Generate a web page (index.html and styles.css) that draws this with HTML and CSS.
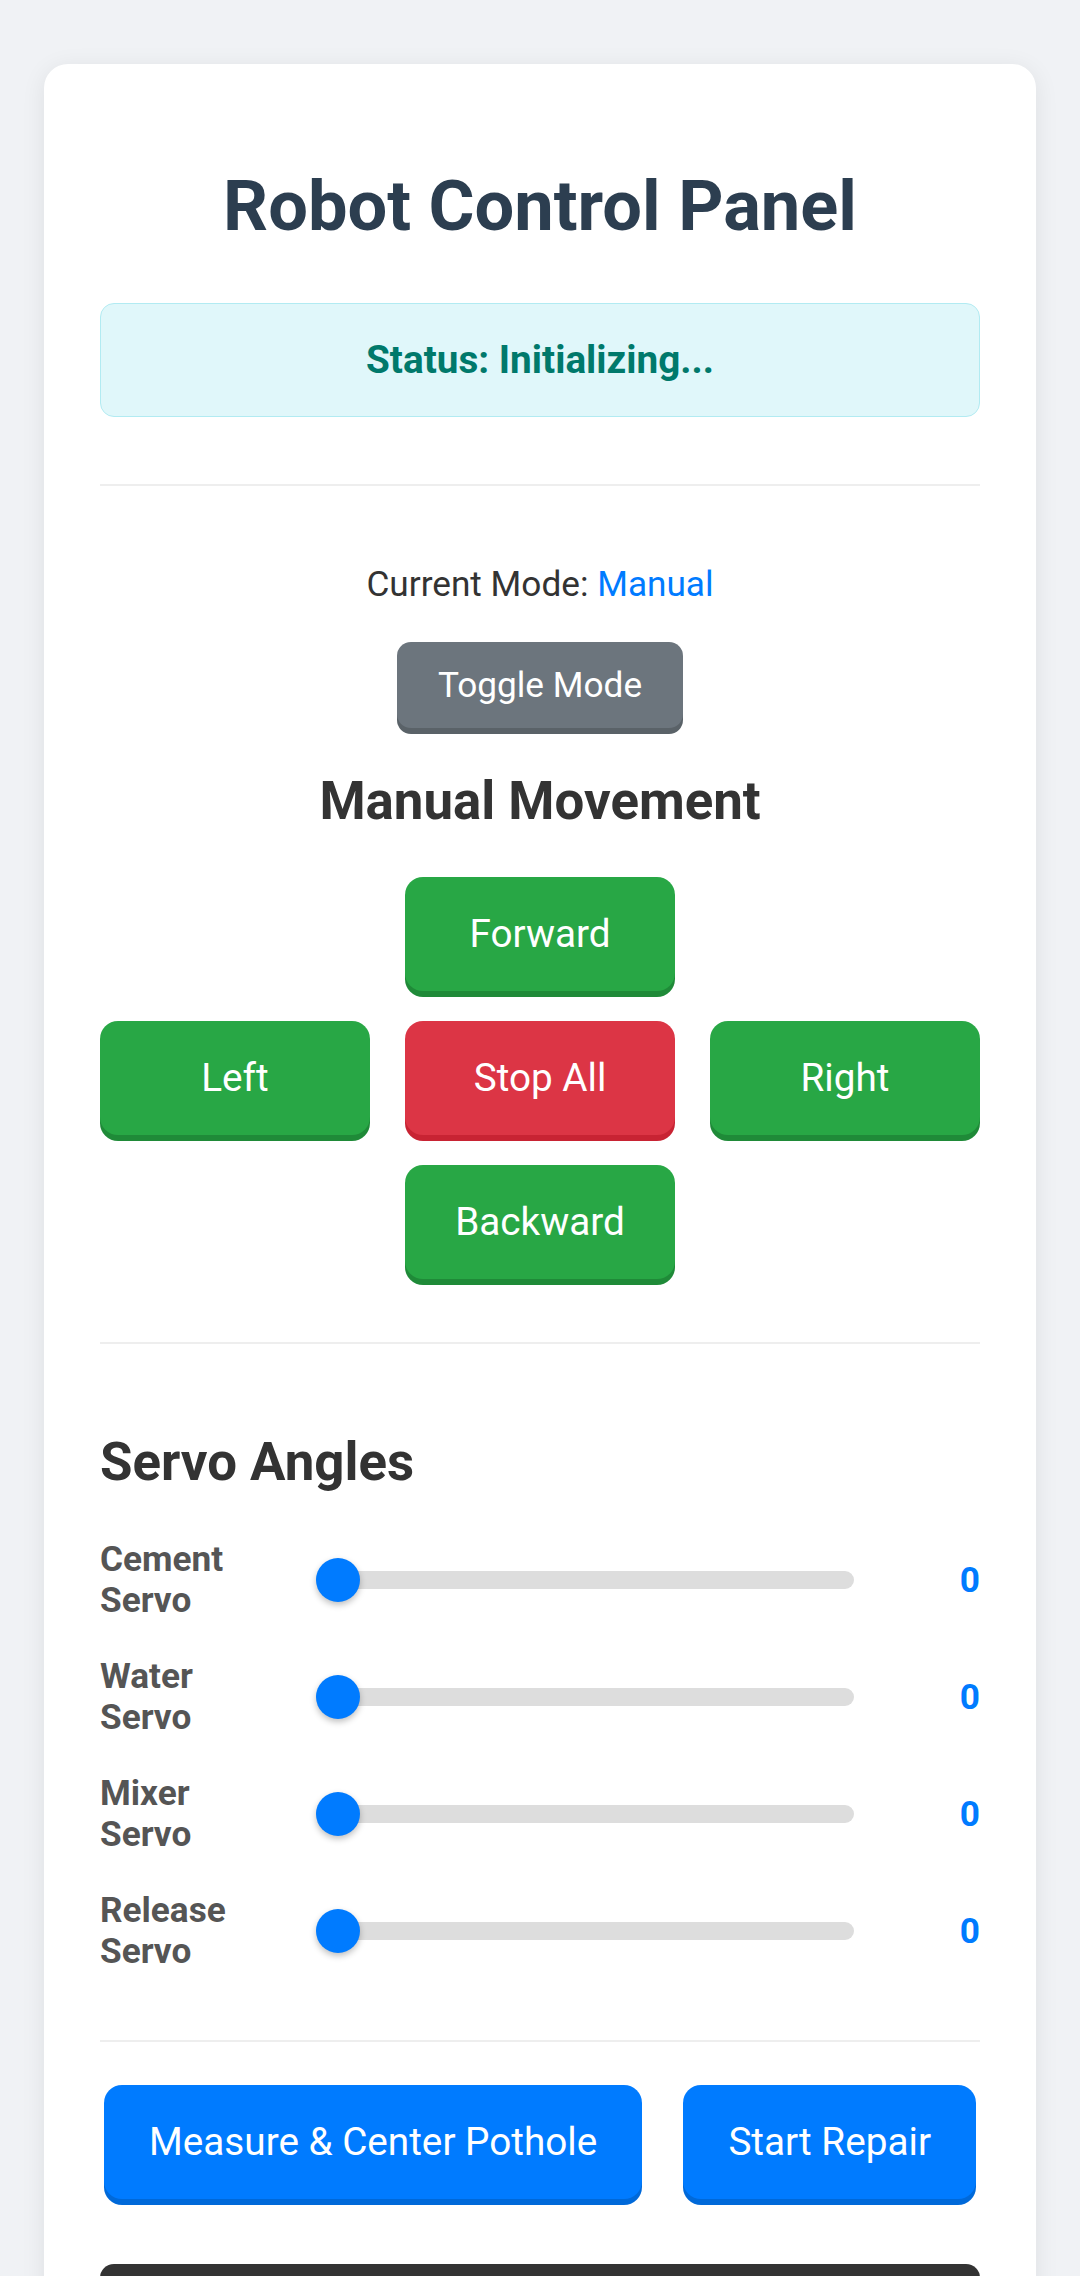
FILE: index.html
```html
<!DOCTYPE html>
<html lang="en">
<head>
<meta charset="utf-8">
<title>Robot Control Panel</title>
<link rel="stylesheet" href="styles.css">
</head>
<body>
<main class="card">
  <h1 class="title">Robot Control Panel</h1>
  <div class="status">Status: Initializing...</div>
  <hr class="divider">

  <section class="mode-section">
    <p class="mode-line">Current Mode: <span class="mode-value">Manual</span></p>
    <button class="btn btn-gray btn-toggle">Toggle Mode</button>
    <h2 class="section-title center">Manual Movement</h2>
    <div class="dpad">
      <button class="btn btn-green btn-move pos-forward">Forward</button>
      <button class="btn btn-green btn-move pos-left">Left</button>
      <button class="btn btn-red btn-move pos-stop">Stop All</button>
      <button class="btn btn-green btn-move pos-right">Right</button>
      <button class="btn btn-green btn-move pos-backward">Backward</button>
    </div>
  </section>

  <hr class="divider">

  <section class="servo-section">
    <h2 class="section-title">Servo Angles</h2>
    <div class="servo-list">
      <div class="servo-row">
        <label class="servo-label">Cement Servo</label>
        <input class="servo-range" type="range" min="0" max="180" value="0">
        <span class="servo-value">0</span>
      </div>
      <div class="servo-row">
        <label class="servo-label">Water Servo</label>
        <input class="servo-range" type="range" min="0" max="180" value="0">
        <span class="servo-value">0</span>
      </div>
      <div class="servo-row">
        <label class="servo-label">Mixer Servo</label>
        <input class="servo-range" type="range" min="0" max="180" value="0">
        <span class="servo-value">0</span>
      </div>
      <div class="servo-row">
        <label class="servo-label">Release Servo</label>
        <input class="servo-range" type="range" min="0" max="180" value="0">
        <span class="servo-value">0</span>
      </div>
    </div>
  </section>

  <hr class="divider">

  <div class="actions">
    <button class="btn btn-blue btn-action">Measure &amp; Center Pothole</button>
    <button class="btn btn-blue btn-action">Start Repair</button>
  </div>

  <div class="log"></div>
</main>
</body>
</html>
```
FILE: styles.css
```css
* { box-sizing: border-box; }

html, body {
  margin: 0;
  padding: 0;
}

body {
  background: #f0f2f5;
  font-family: Roboto, "Noto Sans", "Liberation Sans", sans-serif;
  font-size: 35.2px;
  color: #333;
}

.card {
  margin: 64px 44px;
  padding: 101px 56px 56px;
  background: #ffffff;
  border-radius: 24px;
  box-shadow: 0 4px 24px rgba(0, 0, 0, 0.08);
}

.title {
  margin: 0;
  font-size: 70.4px;
  line-height: 82px;
  font-weight: 700;
  color: #2c3e50;
  text-align: center;
}

.status {
  margin-top: 56px;
  padding: 34px 20px;
  background: #e0f7fa;
  border: 1px solid #b2ebf2;
  border-radius: 14px;
  color: #00796b;
  font-size: 38.7px;
  line-height: 44px;
  font-weight: 700;
  text-align: center;
}

.divider {
  margin: 67px 0 0;
  border: 0;
  height: 2px;
  background: #eeeeee;
}

.mode-section {
  display: flex;
  flex-direction: column;
  align-items: center;
  padding-top: 78px;
}

.mode-line {
  margin: 0;
  font-size: 35.2px;
  line-height: 40px;
  color: #333;
}

.mode-value { color: #007bff; }

.btn {
  font-family: Roboto, "Noto Sans", "Liberation Sans", sans-serif;
  border: 0;
  color: #ffffff;
  font-size: 38.7px;
  line-height: 42px;
  cursor: pointer;
}

.btn-gray { background: #6c757d; box-shadow: 0 6px 0 #5a6268; }
.btn-green { background: #28a745; box-shadow: 0 6px 0 #1f8a38; }
.btn-red { background: #dc3545; box-shadow: 0 6px 0 #c82333; }
.btn-blue { background: #007bff; box-shadow: 0 6px 0 #0069d9; }

.btn-toggle {
  margin-top: 38px;
  padding: 22px 41px;
  border-radius: 14px;
  font-size: 35.2px;
}

.section-title {
  margin: 0;
  font-size: 52.8px;
  line-height: 60px;
  font-weight: 700;
  color: #333;
}

.section-title.center {
  margin-top: 43px;
  text-align: center;
}

.dpad {
  align-self: stretch;
  margin-top: 46px;
  display: grid;
  grid-template-columns: repeat(3, 1fr);
  column-gap: 35px;
  row-gap: 30px;
}

.btn-move {
  height: 114px;
  border-radius: 18px;
}

.pos-forward { grid-column: 2; grid-row: 1; }
.pos-left { grid-column: 1; grid-row: 2; }
.pos-stop { grid-column: 2; grid-row: 2; }
.pos-right { grid-column: 3; grid-row: 2; }
.pos-backward { grid-column: 2; grid-row: 3; }

.mode-section + .divider { margin-top: 63px; }

.servo-section { padding-top: 88px; }

.servo-list {
  margin-top: 47px;
  display: flex;
  flex-direction: column;
  gap: 35px;
}

.servo-row {
  display: flex;
  align-items: center;
  min-height: 82px;
}

.servo-label {
  flex: 0 0 150px;
  font-size: 35.2px;
  line-height: 41px;
  font-weight: 700;
  color: #555;
}

.servo-range {
  -webkit-appearance: none;
  appearance: none;
  margin: 0 0 0 66px;
  flex: 0 0 538px;
  width: 538px;
  height: 44px;
  background: transparent;
}

.servo-range::-webkit-slider-runnable-track {
  height: 18px;
  background: #dddddd;
  border-radius: 9px;
}

.servo-range::-webkit-slider-thumb {
  -webkit-appearance: none;
  appearance: none;
  width: 44px;
  height: 44px;
  margin-top: -13px;
  border-radius: 50%;
  background: #007bff;
  box-shadow: 0 3px 6px rgba(0, 0, 0, 0.25);
}

.servo-value {
  flex: 1;
  text-align: right;
  font-size: 35.2px;
  font-weight: 700;
  color: #007bff;
}

.servo-section + .divider { margin-top: 68px; }

.actions {
  margin-top: 43px;
  display: flex;
  justify-content: space-between;
}

.btn-action {
  margin: 0 4px;
  padding: 36px 45px;
  border-radius: 18px;
}

.log {
  margin-top: 65px;
  min-height: 260px;
  background: #333333;
  border-radius: 14px;
}
```
